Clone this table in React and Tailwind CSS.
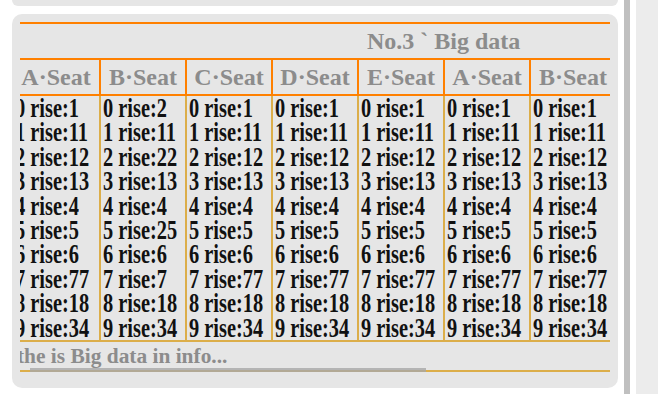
import React from 'react';

const heads = ['A·Seat', 'B·Seat', 'C·Seat', 'D·Seat', 'E·Seat', 'A·Seat', 'B·Seat'];

const base = [1, 11, 12, 13, 4, 5, 6, 77, 18, 34];
const colB = [2, 11, 22, 13, 4, 25, 6, 7, 18, 34];

// one array of rise values per column
const cols = [base, colB, base, base, base, base, base];

export default function App() {
    return (
        <div className="flex h-[394px] w-[658px] bg-white overflow-hidden font-['Liberation_Serif',serif]">
            {/* Cards column */}
            <div className="flex flex-col gap-2 pl-3 w-[618px]">
                {/* Previous card, mostly scrolled away */}
                <div className="h-[6px] rounded-b-[8px] bg-[#e6e6e6]" />

                <div className="h-[374px] rounded-[10px] bg-[#e6e6e6] pt-2 px-2">
                    <div className="relative w-[590px] overflow-hidden">
                        <div className="-ml-[7px] w-[602px]">
                            <div className="h-[2px] w-[604px] bg-[#ff8000]" />
                            <div className="h-[34px] flex items-center pl-[354px] text-[24px] font-bold text-[#8c8c8c] whitespace-nowrap">
                                No.3 ` Big data
                            </div>
                            <div className="h-[2px] w-[604px] bg-[#ff8000]" />

                            {/* Header row */}
                            <div className="flex h-[34px]">
                                {heads.map((h, i) => (
                                    <div
                                        key={i}
                                        className={`w-[86px] shrink-0 flex items-center justify-center text-[24px] font-bold text-[#8c8c8c] whitespace-nowrap ${i > 0 ? 'border-l-2 border-[#ff8000]' : ''}`}
                                    >
                                        {h}
                                    </div>
                                ))}
                            </div>
                            <div className="h-[2px] w-[604px] bg-[#ff8000]" />

                            {/* Data */}
                            <div className="flex">
                                {cols.map((col, i) => (
                                    <div
                                        key={i}
                                        className={`w-[86px] shrink-0 ${i > 0 ? 'border-l-2 border-[#dcae4a]' : ''}`}
                                    >
                                        {col.map((v, r) => (
                                            <div
                                                key={r}
                                                className="h-[24.4px] flex items-center pl-[2px] text-[20.4px] leading-none font-bold text-[#111] whitespace-nowrap"
                                            >
                                                <span className="inline-block scale-y-[1.3]">
                                                    {r} rise:{i === 6 && r === 0 ? 1 : v}
                                                </span>
                                            </div>
                                        ))}
                                    </div>
                                ))}
                            </div>
                            <div className="h-[2px] w-[604px] bg-[#dcae4a]" />

                            {/* Footer */}
                            <div className="h-[28px] flex items-center pl-[4px] text-[21.4px] font-bold text-[#8c8c8c] whitespace-nowrap">
                                the is Big data in info...
                            </div>
                            <div className="h-[2px] w-[604px] bg-[#dcae4a]" />
                        </div>

                        {/* horizontal scroll thumb */}
                        <div className="absolute left-[10px] bottom-[-2px] h-[6px] w-[396px] bg-[#a8a8a8]/80" />
                    </div>
                </div>
            </div>

            {/* Vertical scrollbar */}
            <div className="ml-[6px] w-[6px] h-full bg-[#c0c0c0]" />

            {/* Side panel */}
            <div className="ml-[6px] flex-1 h-full bg-[#ececec]" />
        </div>
    );
}
